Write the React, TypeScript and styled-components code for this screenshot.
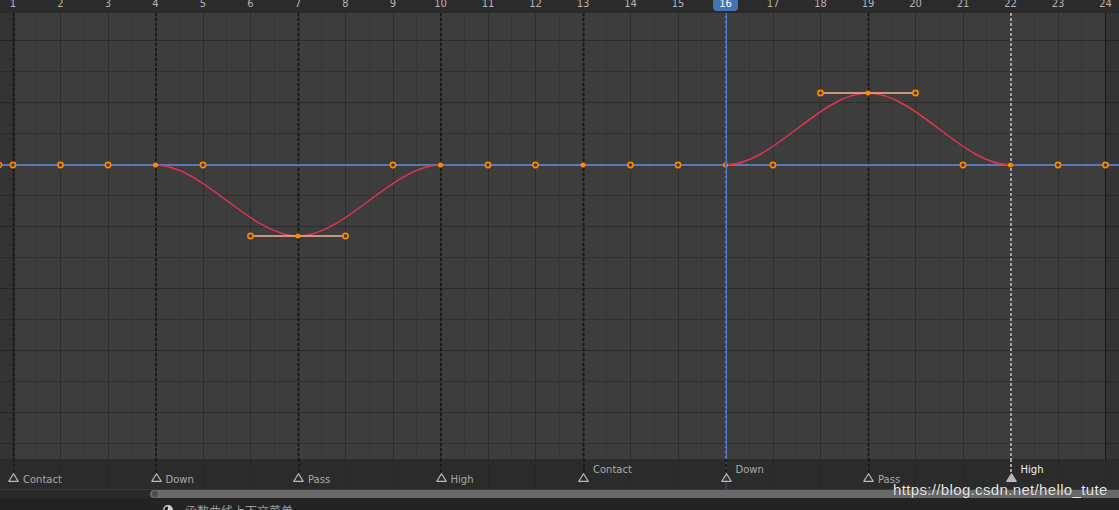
import React from 'react';
import styled, { createGlobalStyle } from 'styled-components';

// frame -> screen x
const START_X = 13;
const STEP = 47.5;
const fx = (f: number) => START_X + (f - 1) * STEP;

const GRAPH_W = 1119;
const GRAPH_H = 446;
const ZERO_Y = 152;
const LOW_Y = 223;
const HIGH_Y = 80;

const GlobalStyle = createGlobalStyle`
  html, body {
    margin: 0;
    padding: 0;
    background: #232323;
  }
  body {
    font-family: "DejaVu Sans", "Noto Sans CJK SC", sans-serif;
  }
`;

const Editor = styled.div`
  position: relative;
  width: 1119px;
  height: 510px;
  display: flex;
  flex-direction: column;
  overflow: hidden;
  background: #232323;
`;

// one column per frame, each column centred on its frame
const FrameScale = styled.div`
  display: grid;
  grid-template-columns: repeat(24, ${STEP}px);
  grid-template-rows: 100%;
  height: 100%;
  margin-left: ${START_X - STEP / 2}px;
  & > * {
    grid-row: 1;
  }
`;

// ==========================================================
// Timeline header
// ==========================================================

const Header = styled.div`
  flex: none;
  height: 13px;
  background: #2b2b2b;
  overflow: hidden;
`;

const FrameNum = styled.span`
  margin-top: -1px;
  text-align: center;
  font: 10px/10px "DejaVu Sans", sans-serif;
  color: #b5b5b5;
`;

const CurrentBadge = styled.span`
  justify-self: center;
  width: 25px;
  height: 11px;
  background: #4772b3;
  border-radius: 0 0 4px 4px;
  text-align: center;
  font: 10px/10px "DejaVu Sans", sans-serif;
  color: #ffffff;
  & > span {
    position: relative;
    top: -1px;
  }
`;

// ==========================================================
// Graph area
// ==========================================================

const GraphArea = styled.div`
  flex: none;
  height: ${GRAPH_H}px;
  background: #3d3d3d;

  svg {
    display: block;
  }
`;

// ==========================================================
// Markers
// ==========================================================

const MarkerRow = styled.div`
  flex: none;
  height: 30px;
  background-color: #2b2b2b;
  background-image: repeating-linear-gradient(
    90deg,
    #272727 0 1px,
    transparent 1px ${STEP}px
  );
  background-position: ${START_X}px 0;
`;

const MarkerCell = styled.div<{ $frame: number }>`
  grid-column: ${p => p.$frame};
  display: flex;
  align-items: flex-start;
  padding-left: ${STEP / 2 - 5}px;
  min-width: 0;
`;

const MarkerPin = styled.div`
  flex: none;
  width: 11px;
  display: flex;
  flex-direction: column;
  align-items: center;
`;

const MarkerStem = styled.div<{ $selected?: boolean }>`
  width: 2px;
  height: 14px;
  background: repeating-linear-gradient(
    to bottom,
    ${p => (p.$selected ? '#a3a3a3' : '#1b1b1b')} 0 3px,
    transparent 3px 5px
  );
`;

const MarkerLabel = styled.span<{ $raised?: boolean; $selected?: boolean }>`
  margin-left: 4px;
  margin-top: ${p => (p.$raised ? '5.5px' : '15.5px')};
  font: 10px/10px "DejaVu Sans", sans-serif;
  color: ${p => (p.$selected ? '#f2f2f2' : '#a9a9a9')};
  white-space: nowrap;
`;

const PlayheadTrail = styled.div<{ $frame: number }>`
  grid-column: ${p => p.$frame};
  justify-self: center;
  width: 2px;
  margin-left: 1px;
  background: rgba(71, 114, 179, 0.35);
`;

// ==========================================================
// Scrollbar + status
// ==========================================================

const ScrollRow = styled.div`
  flex: none;
  height: 9px;
  box-sizing: border-box;
  display: flex;
  padding-left: 150px;
  background: #2a2a2a;
  border-top: 1px solid #3a3a3a;
`;

const ScrollThumb = styled.div`
  flex: 1;
  margin-right: -20px;
  display: flex;
  align-items: center;
  padding-left: 2px;
  background: #696969;
  border-radius: 4px;
`;

const ScrollKnob = styled.div`
  width: 6px;
  height: 6px;
  border-radius: 50%;
  background: #4c4c4c;
`;

const StatusBar = styled.div`
  flex: none;
  height: 12px;
  background: #232323;
  display: flex;
  align-items: flex-start;
  padding-left: 163px;
  gap: 12px;
  overflow: hidden;
`;

const StatusIcon = styled.svg`
  margin-top: 7px;
  flex: none;
`;

const StatusText = styled.span`
  margin-top: 7px;
  font: 12px/12px "Noto Sans CJK SC", sans-serif;
  color: #9d9d9d;
  white-space: nowrap;
`;

const Watermark = styled.span`
  position: absolute;
  left: 893px;
  top: 482px;
  font: 15px/15px "Liberation Sans", Arial, sans-serif;
  letter-spacing: 0.35px;
  color: #e8e8e8;
  text-shadow: 0 0 1px rgba(0, 0, 0, 0.6);
  white-space: nowrap;
`;

// ==========================================================
// Data
// ==========================================================

const FRAMES = Array.from({ length: 24 }, (_, i) => i + 1);
const CURRENT = 16;

const markers = [
  { frame: 1, name: 'Contact' },
  { frame: 4, name: 'Down' },
  { frame: 7, name: 'Pass' },
  { frame: 10, name: 'High' },
  { frame: 13, name: 'Contact', raised: true },
  { frame: 16, name: 'Down', raised: true },
  { frame: 19, name: 'Pass' },
  { frame: 22, name: 'High', raised: true, selected: true },
];

const ringFrames = [2, 3, 5, 9, 11, 12, 14, 15, 17, 21, 23, 24, 1];
const keyFrames = [4, 10, 13, 16, 22];

const ORANGE = '#ff8a00';

const Ring = ({ x, y }: { x: number; y: number }) => (
  <circle cx={x} cy={y} r={2.6} fill="#3d3d3d" stroke={ORANGE} strokeWidth={1.6} />
);

const Key = ({ x, y }: { x: number; y: number }) => (
  <circle cx={x} cy={y} r={2.5} fill={ORANGE} />
);

const GraphSvg: React.FC = () => {
  const vLines: React.ReactNode[] = [];
  for (let k = -1; k <= 47; k++) {
    const x = START_X + k * (STEP / 2);
    vLines.push(
      <line
        key={'v' + k}
        x1={x}
        x2={x}
        y1={0}
        y2={GRAPH_H}
        stroke={k % 2 === 0 ? '#2d2d2d' : '#363636'}
        strokeWidth={1}
      />
    );
  }
  const hLines: React.ReactNode[] = [];
  for (let k = -1; k <= 13; k++) {
    const y = 27 + k * 31 + 0.5;
    hLines.push(
      <line
        key={'h' + k}
        x1={0}
        x2={GRAPH_W}
        y1={y}
        y2={y}
        stroke={k % 2 === 0 ? '#2c2c2c' : '#313131'}
        strokeWidth={1}
      />
    );
  }

  const lowCurve =
    `M${fx(4)},${ZERO_Y} C${fx(5)},${ZERO_Y} ${fx(6)},${LOW_Y} ${fx(7)},${LOW_Y} ` +
    `C${fx(8)},${LOW_Y} ${fx(9)},${ZERO_Y} ${fx(10)},${ZERO_Y}`;
  const highCurve =
    `M${fx(16)},${ZERO_Y} C${fx(17)},${ZERO_Y} ${fx(18)},${HIGH_Y} ${fx(19)},${HIGH_Y} ` +
    `C${fx(20)},${HIGH_Y} ${fx(21)},${ZERO_Y} ${fx(22)},${ZERO_Y}`;

  return (
    <svg width={GRAPH_W} height={GRAPH_H}>
      <g shapeRendering="crispEdges">
        {vLines}
        {hLines}
        {/* outside of scene range */}
        <rect x={0} y={0} width={fx(1)} height={GRAPH_H} fill="rgba(0,0,0,0.14)" />
        <rect x={fx(24)} y={0} width={GRAPH_W - fx(24)} height={GRAPH_H} fill="rgba(0,0,0,0.14)" />
        <line x1={fx(1) + 0.5} x2={fx(1) + 0.5} y1={0} y2={GRAPH_H} stroke="#262626" strokeWidth={2} />
        <line x1={fx(24)} x2={fx(24)} y1={0} y2={GRAPH_H} stroke="#161616" strokeWidth={1} />
      </g>

      {/* marker lines */}
      {markers.map(m => (
        <line
          key={'m' + m.frame}
          x1={fx(m.frame) + 0.5}
          x2={fx(m.frame) + 0.5}
          y1={0}
          y2={GRAPH_H}
          stroke={m.selected ? '#a3a3a3' : '#1b1b1b'}
          strokeWidth={2}
          strokeDasharray="3 2"
        />
      ))}

      {/* flat blue channel */}
      <line x1={0} x2={GRAPH_W} y1={ZERO_Y} y2={ZERO_Y} stroke="#5a78b8" strokeWidth={2} />

      {/* red channel */}
      <path d={lowCurve} fill="none" stroke="#e2344f" strokeWidth={1.5} />
      <path d={highCurve} fill="none" stroke="#e2344f" strokeWidth={1.5} />

      <line x1={fx(6)} x2={fx(8)} y1={LOW_Y} y2={LOW_Y} stroke="#f3b48f" strokeWidth={1.4} />
      <line x1={fx(18)} x2={fx(20)} y1={HIGH_Y} y2={HIGH_Y} stroke="#f3b48f" strokeWidth={1.4} />

      <Ring x={-1} y={ZERO_Y} />
      {ringFrames.map(f => (
        <Ring key={'r' + f} x={fx(f)} y={ZERO_Y} />
      ))}
      {keyFrames.map(f => (
        <Key key={'k' + f} x={fx(f)} y={ZERO_Y} />
      ))}

      <Ring x={fx(6)} y={LOW_Y} />
      <Ring x={fx(8)} y={LOW_Y} />
      <Key x={fx(7)} y={LOW_Y} />
      <Ring x={fx(18)} y={HIGH_Y} />
      <Ring x={fx(20)} y={HIGH_Y} />
      <Key x={fx(19)} y={HIGH_Y} />

      {/* playhead */}
      <rect x={fx(CURRENT) - 0.5} y={0} width={2} height={GRAPH_H} fill="#4f7dc6" />
      <line
        x1={fx(CURRENT)}
        x2={fx(CURRENT)}
        y1={0}
        y2={GRAPH_H}
        stroke="rgba(20,20,20,0.45)"
        strokeWidth={1}
        strokeDasharray="3 2"
      />
    </svg>
  );
};

const MarkerTriangle = ({ selected }: { selected?: boolean }) => (
  <svg width={11} height={9} viewBox="0 0 11 9">
    <polygon
      points="5.5,0.8 10.2,8.3 0.8,8.3"
      fill={selected ? '#b4b4b4' : 'none'}
      stroke="#bdbdbd"
      strokeWidth={1.2}
      strokeLinejoin="round"
    />
  </svg>
);

const App: React.FC = () => {
  return (
    <>
      <GlobalStyle />
      <Editor>
        <Header>
          <FrameScale>
            {FRAMES.map(f =>
              f === CURRENT ? (
                <CurrentBadge key={f}>
                  <span>{f}</span>
                </CurrentBadge>
              ) : (
                <FrameNum key={f}>{f}</FrameNum>
              )
            )}
          </FrameScale>
        </Header>

        <GraphArea>
          <GraphSvg />
        </GraphArea>

        <MarkerRow>
          <FrameScale>
            <PlayheadTrail $frame={CURRENT} />
            {markers.map(m => (
              <MarkerCell key={m.frame} $frame={m.frame}>
                <MarkerPin>
                  <MarkerStem $selected={m.selected} />
                  <MarkerTriangle selected={m.selected} />
                </MarkerPin>
                <MarkerLabel $raised={m.raised} $selected={m.selected}>
                  {m.name}
                </MarkerLabel>
              </MarkerCell>
            ))}
          </FrameScale>
        </MarkerRow>

        <ScrollRow>
          <ScrollThumb>
            <ScrollKnob />
          </ScrollThumb>
        </ScrollRow>

        <StatusBar>
          <StatusIcon width={10} height={12} viewBox="0 0 10 12">
            <rect x={0.75} y={0.75} width={8.5} height={10.5} rx={4} fill="none" stroke="#d0d0d0" strokeWidth={1.3} />
            <path d="M5 0.75 A4 4 0 0 1 9.25 4.75 L9.25 6 L5 6 Z" fill="#d0d0d0" />
          </StatusIcon>
          <StatusText>函数曲线上下文菜单</StatusText>
        </StatusBar>

        <Watermark>https://blog.csdn.net/hello_tute</Watermark>
      </Editor>
    </>
  );
};

export default App;
